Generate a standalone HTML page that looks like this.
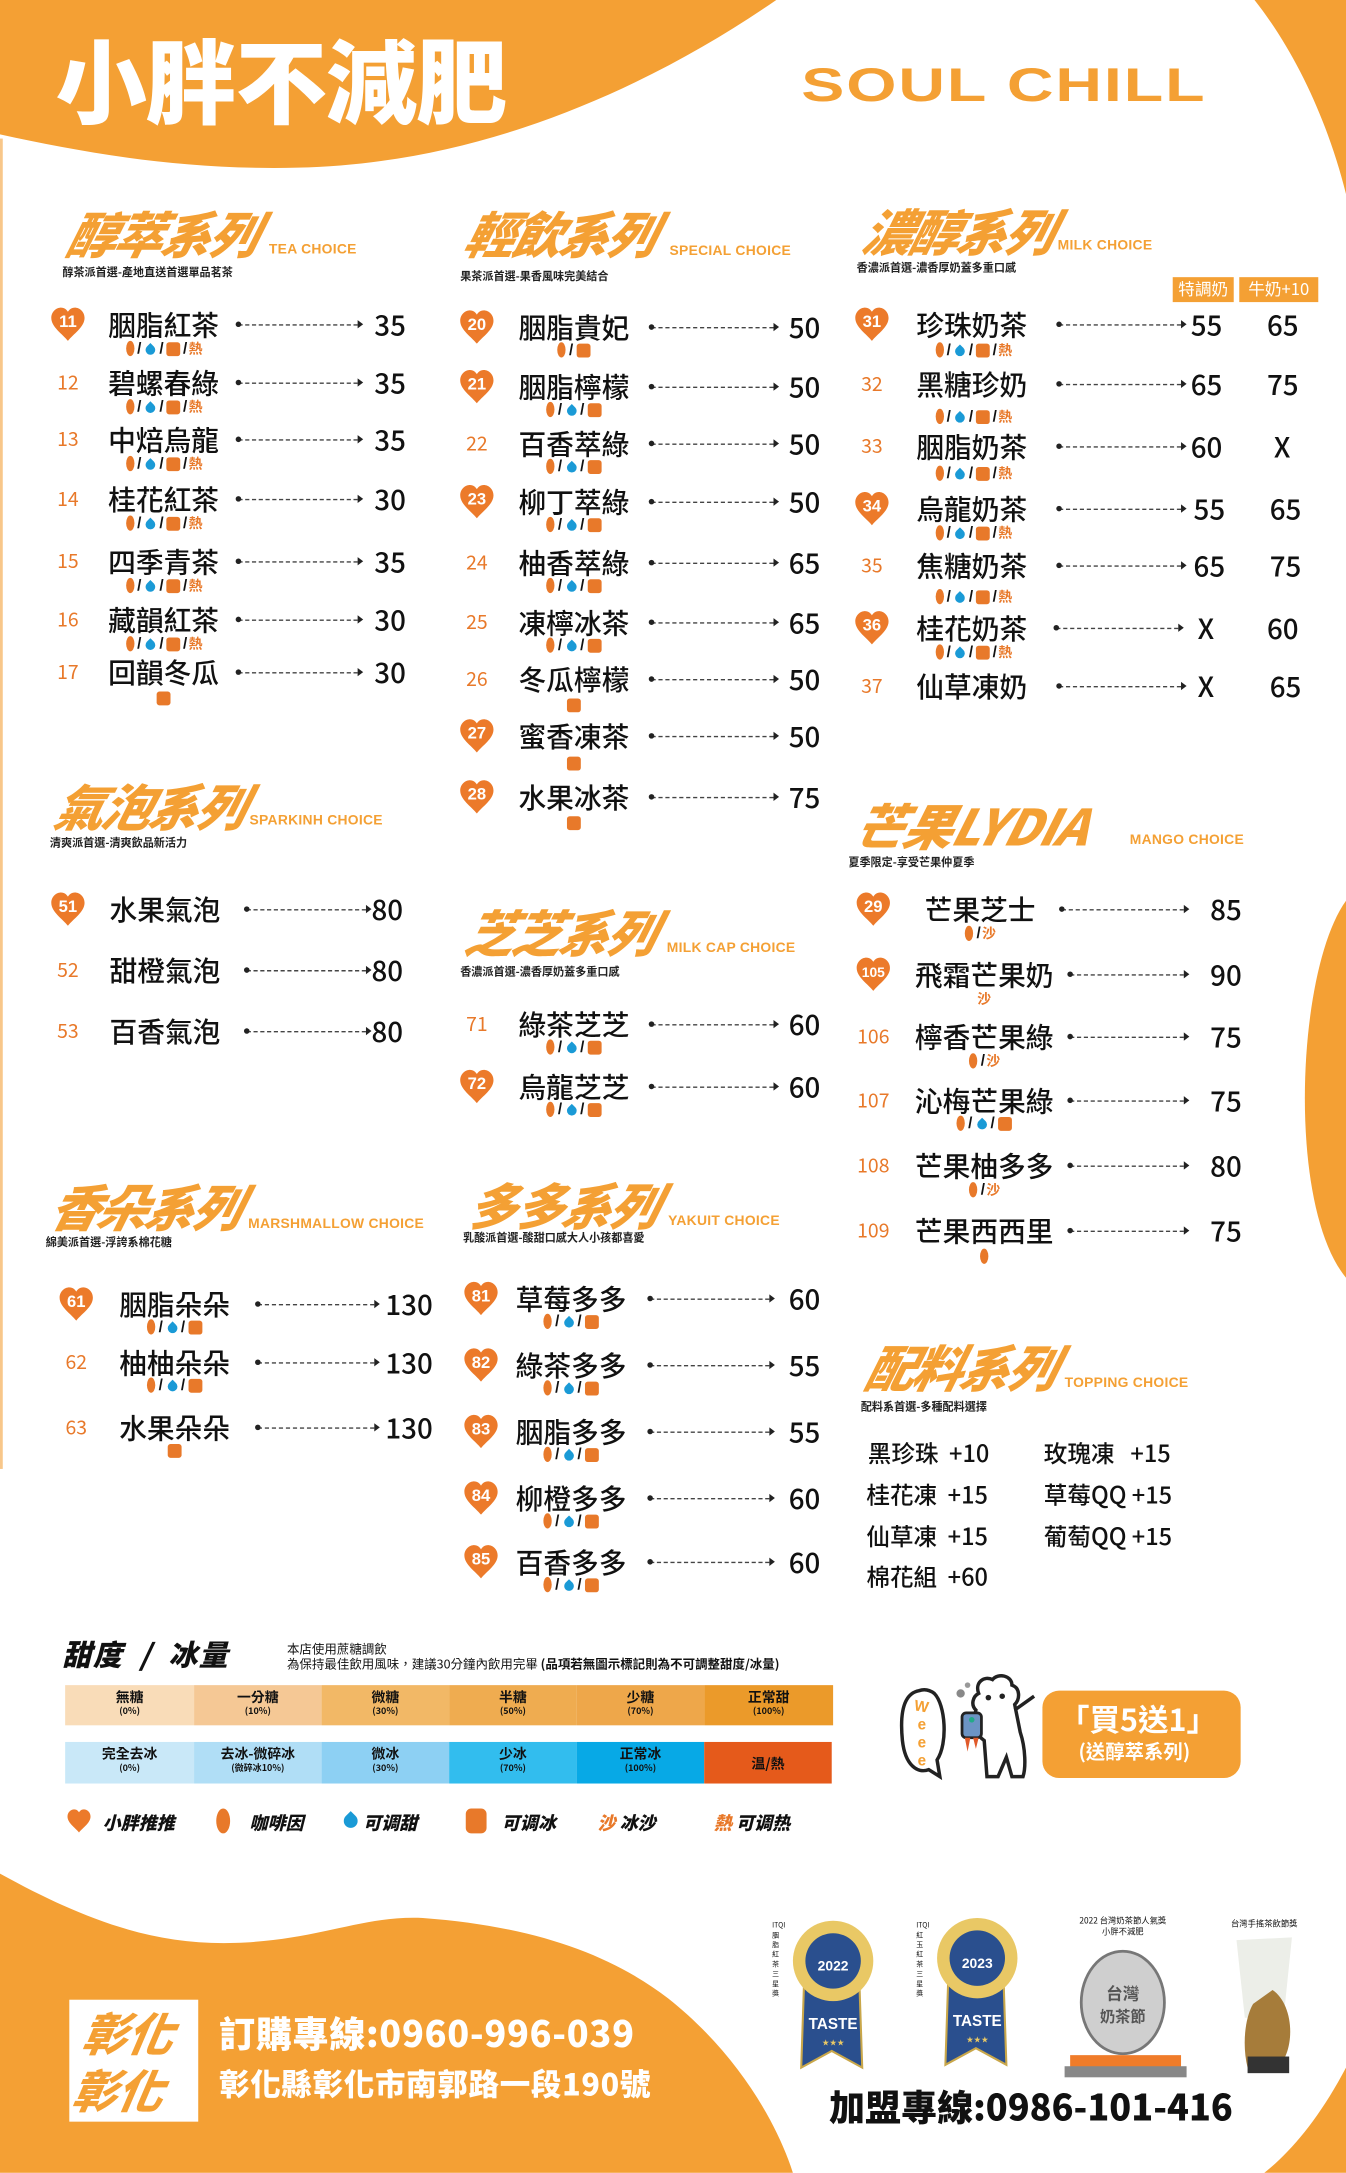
<!DOCTYPE html>
<html><head><meta charset="utf-8">
<style>
*{margin:0;padding:0;box-sizing:border-box}
html,body{width:1346px;height:2173px;overflow:hidden;background:#fff}
#w{position:absolute;left:0;top:0;width:971px;height:1568px;transform:scale(1.3862,1.3858);transform-origin:0 0;font-family:"Liberation Sans","Noto Sans CJK TC",sans-serif;color:#111}
.a{position:absolute}
.hd{position:absolute;font-family:"Noto Sans CJK TC",sans-serif;font-weight:900;font-style:italic;color:#f4a034;font-size:36px;line-height:38px;letter-spacing:-2px;transform:skewX(-14deg);white-space:nowrap}
.en{position:absolute;font-family:"Liberation Sans",sans-serif;font-weight:bold;color:#f4a034;font-size:10px;white-space:nowrap;letter-spacing:.2px}
.sub{position:absolute;font-family:"Noto Sans CJK TC",sans-serif;font-weight:700;font-size:8px;white-space:nowrap;color:#222}
.r{position:absolute;height:36px;width:340px}
.r .nm{position:absolute;top:0;font-family:"Noto Sans CJK TC",sans-serif;font-size:20px;line-height:24px;white-space:nowrap;font-weight:500}
.r .ic{position:absolute;top:23px;height:12px;font-size:11px;line-height:12px;white-space:nowrap;text-align:center}
.r .dt{position:absolute;top:12px;height:1px;border-top:1px dashed #444}
.r .dt:before{content:"";position:absolute;left:-2px;top:-3px;width:4px;height:4px;border-radius:50%;background:#222}
.r .dt:after{content:"";position:absolute;right:-4px;top:-4px;border-left:4px solid #222;border-top:3px solid transparent;border-bottom:3px solid transparent}
.r .pr{position:absolute;top:0;font-family:"Noto Sans CJK TC","Liberation Sans",sans-serif;font-size:20px;line-height:24px;font-weight:500}
.r .no{position:absolute;left:0;top:3px;width:26px;text-align:center;color:#e8792a;font-size:14px;line-height:18px;font-family:"Noto Sans CJK TC",sans-serif}
.hb{position:absolute;left:0;top:-1px;width:26px;height:26px}
.b{display:inline-block;width:6px;height:11px;border-radius:50%;background:#e8792a;vertical-align:-2px;margin:0 1px}
.d{display:inline-block;width:7px;height:7px;border-radius:0 50% 50% 50%;background:#1a9ad6;transform:rotate(45deg);vertical-align:-1px;margin:0 2px}
.i{display:inline-block;width:10px;height:10px;border-radius:2px;background:#e8792a;vertical-align:-2px;margin:0 1px}
.h,.s{color:#e8792a;font-weight:700;font-family:"Noto Sans CJK TC",sans-serif;font-size:10px}
.sl{color:#111;margin:0 1px;font-size:11px}
.tp{position:absolute;font-family:"Noto Sans CJK TC",sans-serif;font-size:17px;white-space:nowrap;font-weight:500}
.cell{position:absolute;text-align:center;font-family:"Noto Sans CJK TC",sans-serif;font-weight:700;font-size:10px;line-height:12px;padding-top:2px}
.cell small{display:block;font-size:6.5px;line-height:9px}
.lg{position:absolute;font-family:"Noto Sans CJK TC",sans-serif;font-weight:900;font-style:italic;font-size:13px;white-space:nowrap}
</style></head><body><div id="w">
<svg class="a" style="left:0;top:0" width="971" height="1568" viewBox="0 0 971 1568">
<path d="M0,0H560C470,62 350,118 215,121C130,123 60,110 0,97Z" fill="#f4a034"/>
<path d="M905,0H971V140C958,88 935,38 905,0Z" fill="#f4a034"/>
<path d="M971,650C935,700 928,870 971,922Z" fill="#f4a034"/>
<rect x="0" y="100" width="2" height="960" fill="#f8c78a"/>
<path d="M0,1352C60,1385 110,1404 170,1402C230,1400 262,1382 305,1384C385,1390 440,1410 482,1442C530,1480 560,1530 572,1568H0Z" fill="#f4a034"/>
<path d="M971,1492C952,1528 932,1552 912,1568H971Z" fill="#f4a034"/>
</svg>
<div class="a" style="left:40px;top:18px;font-family:'Noto Sans CJK TC',sans-serif;font-weight:900;font-size:66px;line-height:76px;color:#fff;letter-spacing:-1px">小胖不減肥</div>
<div class="a" style="left:578px;top:43px;font-family:'Liberation Sans',sans-serif;font-weight:bold;font-size:34px;color:#f4a034;letter-spacing:1px;transform:scaleX(1.37);transform-origin:0 0">SOUL CHILL</div>

<!-- headers -->
<div class="hd" style="left:50px;top:149px">醇萃系列</div><div class="en" style="left:194px;top:175px">TEA CHOICE</div><div class="sub" style="left:45px;top:191px">醇茶派首選-產地直送首選單品茗茶</div>
<div class="hd" style="left:337px;top:149px">輕飲系列</div><div class="en" style="left:483px;top:176px">SPECIAL CHOICE</div><div class="sub" style="left:332px;top:194px">果茶派首選-果香風味完美結合</div>
<div class="hd" style="left:624px;top:147px">濃醇系列</div><div class="en" style="left:763px;top:172px">MILK CHOICE</div><div class="sub" style="left:618px;top:188px">香濃派首選-濃香厚奶蓋多重口感</div>
<div class="a" style="left:846px;top:200px;width:44px;height:18px;background:#f4a034;color:#fff;font-size:12px;line-height:18px;text-align:center;font-family:'Noto Sans CJK TC',sans-serif">特調奶</div>
<div class="a" style="left:894px;top:200px;width:57px;height:18px;background:#f4a034;color:#fff;font-size:12px;line-height:18px;text-align:center;font-family:'Noto Sans CJK TC',sans-serif">牛奶+10</div>
<div class="hd" style="left:41px;top:562px">氣泡系列</div><div class="en" style="left:180px;top:587px">SPARKINH CHOICE</div><div class="sub" style="left:36px;top:603px">清爽派首選-清爽飲品新活力</div>
<div class="hd" style="left:337px;top:653px">芝芝系列</div><div class="en" style="left:481px;top:679px">MILK CAP CHOICE</div><div class="sub" style="left:332px;top:696px">香濃派首選-濃香厚奶蓋多重口感</div>
<div class="hd" style="left:618px;top:576px;letter-spacing:-1px">芒果LYDIA</div><div class="en" style="left:815px;top:601px">MANGO CHOICE</div><div class="sub" style="left:612px;top:617px">夏季限定-享受芒果仲夏季</div>
<div class="hd" style="left:38px;top:851px">香朵系列</div><div class="en" style="left:179px;top:878px">MARSHMALLOW CHOICE</div><div class="sub" style="left:33px;top:891px">綿美派首選-浮誇系棉花糖</div>
<div class="hd" style="left:339px;top:850px">多多系列</div><div class="en" style="left:482px;top:876px">YAKUIT CHOICE</div><div class="sub" style="left:334px;top:888px">乳酸派首選-酸甜口感大人小孩都喜愛</div>
<div class="hd" style="left:626px;top:967px">配料系列</div><div class="en" style="left:768px;top:993px">TOPPING CHOICE</div><div class="sub" style="left:621px;top:1010px">配料系首選-多種配料選擇</div>

<svg width="0" height="0" style="position:absolute"><defs><symbol id="ht" viewBox="0 0 26 26"><path d="M13,25C9,20 1,15 1,8.5C1,4 4.5,1 8,1C10.5,1 12,2.5 13,4C14,2.5 15.5,1 18,1C21.5,1 25,4 25,8.5C25,15 17,20 13,25Z" fill="#ec7a2a"/></symbol></defs></svg>

<!-- Column 1 -->
<div class="r" style="left:36px;top:222px"><svg class="hb"><use href="#ht"/><text x="13" y="15" fill="#fff" font-size="12" font-weight="bold" text-anchor="middle" font-family="Liberation Sans">11</text></svg><span class="nm" style="left:42px">胭脂紅茶</span><span class="ic" style="left:42px;width:80px"><i class="b"></i><b class="sl">/</b><i class="d"></i><b class="sl">/</b><i class="i"></i><b class="sl">/</b><span class="h">熱</span></span><span class="dt" style="left:136px;width:86px"></span><span class="pr" style="left:234px">35</span></div>
<div class="r" style="left:36px;top:264px"><span class="no">12</span><span class="nm" style="left:42px">碧螺春綠</span><span class="ic" style="left:42px;width:80px"><i class="b"></i><b class="sl">/</b><i class="d"></i><b class="sl">/</b><i class="i"></i><b class="sl">/</b><span class="h">熱</span></span><span class="dt" style="left:136px;width:86px"></span><span class="pr" style="left:234px">35</span></div>
<div class="r" style="left:36px;top:305px"><span class="no">13</span><span class="nm" style="left:42px">中焙烏龍</span><span class="ic" style="left:42px;width:80px"><i class="b"></i><b class="sl">/</b><i class="d"></i><b class="sl">/</b><i class="i"></i><b class="sl">/</b><span class="h">熱</span></span><span class="dt" style="left:136px;width:86px"></span><span class="pr" style="left:234px">35</span></div>
<div class="r" style="left:36px;top:348px"><span class="no">14</span><span class="nm" style="left:42px">桂花紅茶</span><span class="ic" style="left:42px;width:80px"><i class="b"></i><b class="sl">/</b><i class="d"></i><b class="sl">/</b><i class="i"></i><b class="sl">/</b><span class="h">熱</span></span><span class="dt" style="left:136px;width:86px"></span><span class="pr" style="left:234px">30</span></div>
<div class="r" style="left:36px;top:393px"><span class="no">15</span><span class="nm" style="left:42px">四季青茶</span><span class="ic" style="left:42px;width:80px"><i class="b"></i><b class="sl">/</b><i class="d"></i><b class="sl">/</b><i class="i"></i><b class="sl">/</b><span class="h">熱</span></span><span class="dt" style="left:136px;width:86px"></span><span class="pr" style="left:234px">35</span></div>
<div class="r" style="left:36px;top:435px"><span class="no">16</span><span class="nm" style="left:42px">藏韻紅茶</span><span class="ic" style="left:42px;width:80px"><i class="b"></i><b class="sl">/</b><i class="d"></i><b class="sl">/</b><i class="i"></i><b class="sl">/</b><span class="h">熱</span></span><span class="dt" style="left:136px;width:86px"></span><span class="pr" style="left:234px">30</span></div>
<div class="r" style="left:36px;top:473px"><span class="no">17</span><span class="nm" style="left:42px">回韻冬瓜</span><span class="ic" style="left:42px;width:80px;top:25px"><i class="i"></i></span><span class="dt" style="left:136px;width:86px"></span><span class="pr" style="left:234px">30</span></div>

<!-- Column 2 -->
<div class="r" style="left:331px;top:224px"><svg class="hb"><use href="#ht"/><text x="13" y="15" fill="#fff" font-size="12" font-weight="bold" text-anchor="middle" font-family="Liberation Sans">20</text></svg><span class="nm" style="left:43px">胭脂貴妃</span><span class="ic" style="left:43px;width:80px"><i class="b"></i><b class="sl">/</b><i class="i"></i></span><span class="dt" style="left:139px;width:88px"></span><span class="pr" style="left:238px">50</span></div>
<div class="r" style="left:331px;top:267px"><svg class="hb"><use href="#ht"/><text x="13" y="15" fill="#fff" font-size="12" font-weight="bold" text-anchor="middle" font-family="Liberation Sans">21</text></svg><span class="nm" style="left:43px">胭脂檸檬</span><span class="ic" style="left:43px;width:80px"><i class="b"></i><b class="sl">/</b><i class="d"></i><b class="sl">/</b><i class="i"></i></span><span class="dt" style="left:139px;width:88px"></span><span class="pr" style="left:238px">50</span></div>
<div class="r" style="left:331px;top:308px"><span class="no">22</span><span class="nm" style="left:43px">百香萃綠</span><span class="ic" style="left:43px;width:80px"><i class="b"></i><b class="sl">/</b><i class="d"></i><b class="sl">/</b><i class="i"></i></span><span class="dt" style="left:139px;width:88px"></span><span class="pr" style="left:238px">50</span></div>
<div class="r" style="left:331px;top:350px"><svg class="hb"><use href="#ht"/><text x="13" y="15" fill="#fff" font-size="12" font-weight="bold" text-anchor="middle" font-family="Liberation Sans">23</text></svg><span class="nm" style="left:43px">柳丁萃綠</span><span class="ic" style="left:43px;width:80px"><i class="b"></i><b class="sl">/</b><i class="d"></i><b class="sl">/</b><i class="i"></i></span><span class="dt" style="left:139px;width:88px"></span><span class="pr" style="left:238px">50</span></div>
<div class="r" style="left:331px;top:394px"><span class="no">24</span><span class="nm" style="left:43px">柚香萃綠</span><span class="ic" style="left:43px;width:80px"><i class="b"></i><b class="sl">/</b><i class="d"></i><b class="sl">/</b><i class="i"></i></span><span class="dt" style="left:139px;width:88px"></span><span class="pr" style="left:238px">65</span></div>
<div class="r" style="left:331px;top:437px"><span class="no">25</span><span class="nm" style="left:43px">凍檸冰茶</span><span class="ic" style="left:43px;width:80px"><i class="b"></i><b class="sl">/</b><i class="d"></i><b class="sl">/</b><i class="i"></i></span><span class="dt" style="left:139px;width:88px"></span><span class="pr" style="left:238px">65</span></div>
<div class="r" style="left:331px;top:478px"><span class="no">26</span><span class="nm" style="left:43px">冬瓜檸檬</span><span class="ic" style="left:43px;width:80px;top:25px"><i class="i"></i></span><span class="dt" style="left:139px;width:88px"></span><span class="pr" style="left:238px">50</span></div>
<div class="r" style="left:331px;top:519px"><svg class="hb"><use href="#ht"/><text x="13" y="15" fill="#fff" font-size="12" font-weight="bold" text-anchor="middle" font-family="Liberation Sans">27</text></svg><span class="nm" style="left:43px">蜜香凍茶</span><span class="ic" style="left:43px;width:80px;top:26px"><i class="i"></i></span><span class="dt" style="left:139px;width:88px"></span><span class="pr" style="left:238px">50</span></div>
<div class="r" style="left:331px;top:563px"><svg class="hb"><use href="#ht"/><text x="13" y="15" fill="#fff" font-size="12" font-weight="bold" text-anchor="middle" font-family="Liberation Sans">28</text></svg><span class="nm" style="left:43px">水果冰茶</span><span class="ic" style="left:43px;width:80px;top:25px"><i class="i"></i></span><span class="dt" style="left:139px;width:88px"></span><span class="pr" style="left:238px">75</span></div>

<!-- Column 3 -->
<div class="r" style="left:616px;top:222px;width:350px"><svg class="hb"><use href="#ht"/><text x="13" y="15" fill="#fff" font-size="12" font-weight="bold" text-anchor="middle" font-family="Liberation Sans">31</text></svg><span class="nm" style="left:45px">珍珠奶茶</span><span class="ic" style="left:45px;width:82px;top:24px"><i class="b"></i><b class="sl">/</b><i class="d"></i><b class="sl">/</b><i class="i"></i><b class="sl">/</b><span class="h">熱</span></span><span class="dt" style="left:148px;width:88px"></span><span class="pr" style="left:243px">55</span><span class="pr" style="left:298px">65</span></div>
<div class="r" style="left:616px;top:265px;width:350px"><span class="no">32</span><span class="nm" style="left:45px">黑糖珍奶</span><span class="ic" style="left:45px;width:82px;top:29px"><i class="b"></i><b class="sl">/</b><i class="d"></i><b class="sl">/</b><i class="i"></i><b class="sl">/</b><span class="h">熱</span></span><span class="dt" style="left:148px;width:88px"></span><span class="pr" style="left:243px">65</span><span class="pr" style="left:298px">75</span></div>
<div class="r" style="left:616px;top:310px;width:350px"><span class="no">33</span><span class="nm" style="left:45px">胭脂奶茶</span><span class="ic" style="left:45px;width:82px;top:25px"><i class="b"></i><b class="sl">/</b><i class="d"></i><b class="sl">/</b><i class="i"></i><b class="sl">/</b><span class="h">熱</span></span><span class="dt" style="left:148px;width:88px"></span><span class="pr" style="left:243px">60</span><span class="pr" style="left:303px">X</span></div>
<div class="r" style="left:616px;top:355px;width:350px"><svg class="hb"><use href="#ht"/><text x="13" y="15" fill="#fff" font-size="12" font-weight="bold" text-anchor="middle" font-family="Liberation Sans">34</text></svg><span class="nm" style="left:45px">烏龍奶茶</span><span class="ic" style="left:45px;width:82px;top:23px"><i class="b"></i><b class="sl">/</b><i class="d"></i><b class="sl">/</b><i class="i"></i><b class="sl">/</b><span class="h">熱</span></span><span class="dt" style="left:148px;width:88px"></span><span class="pr" style="left:245px">55</span><span class="pr" style="left:300px">65</span></div>
<div class="r" style="left:616px;top:396px;width:350px"><span class="no">35</span><span class="nm" style="left:45px">焦糖奶茶</span><span class="ic" style="left:45px;width:82px;top:28px"><i class="b"></i><b class="sl">/</b><i class="d"></i><b class="sl">/</b><i class="i"></i><b class="sl">/</b><span class="h">熱</span></span><span class="dt" style="left:148px;width:88px"></span><span class="pr" style="left:245px">65</span><span class="pr" style="left:300px">75</span></div>
<div class="r" style="left:616px;top:441px;width:350px"><svg class="hb"><use href="#ht"/><text x="13" y="15" fill="#fff" font-size="12" font-weight="bold" text-anchor="middle" font-family="Liberation Sans">36</text></svg><span class="nm" style="left:45px">桂花奶茶</span><span class="ic" style="left:45px;width:82px;top:23px"><i class="b"></i><b class="sl">/</b><i class="d"></i><b class="sl">/</b><i class="i"></i><b class="sl">/</b><span class="h">熱</span></span><span class="dt" style="left:146px;width:88px"></span><span class="pr" style="left:248px">X</span><span class="pr" style="left:298px">60</span></div>
<div class="r" style="left:616px;top:483px;width:350px"><span class="no">37</span><span class="nm" style="left:45px">仙草凍奶</span><span class="dt" style="left:148px;width:88px"></span><span class="pr" style="left:248px">X</span><span class="pr" style="left:300px">65</span></div>

<!-- Sparkling -->
<div class="r" style="left:36px;top:644px"><svg class="hb"><use href="#ht"/><text x="13" y="15" fill="#fff" font-size="12" font-weight="bold" text-anchor="middle" font-family="Liberation Sans">51</text></svg><span class="nm" style="left:43px">水果氣泡</span><span class="dt" style="left:142px;width:86px"></span><span class="pr" style="left:232px">80</span></div>
<div class="r" style="left:36px;top:688px"><span class="no">52</span><span class="nm" style="left:43px">甜橙氣泡</span><span class="dt" style="left:142px;width:86px"></span><span class="pr" style="left:232px">80</span></div>
<div class="r" style="left:36px;top:732px"><span class="no">53</span><span class="nm" style="left:43px">百香氣泡</span><span class="dt" style="left:142px;width:86px"></span><span class="pr" style="left:232px">80</span></div>

<!-- 芝芝 -->
<div class="r" style="left:331px;top:727px"><span class="no">71</span><span class="nm" style="left:43px">綠茶芝芝</span><span class="ic" style="left:43px;width:80px"><i class="b"></i><b class="sl">/</b><i class="d"></i><b class="sl">/</b><i class="i"></i></span><span class="dt" style="left:139px;width:88px"></span><span class="pr" style="left:238px">60</span></div>
<div class="r" style="left:331px;top:772px"><svg class="hb"><use href="#ht"/><text x="13" y="15" fill="#fff" font-size="12" font-weight="bold" text-anchor="middle" font-family="Liberation Sans">72</text></svg><span class="nm" style="left:43px">烏龍芝芝</span><span class="ic" style="left:43px;width:80px"><i class="b"></i><b class="sl">/</b><i class="d"></i><b class="sl">/</b><i class="i"></i></span><span class="dt" style="left:139px;width:88px"></span><span class="pr" style="left:238px">60</span></div>

<!-- Mango -->
<div class="r" style="left:617px;top:644px"><svg class="hb"><use href="#ht"/><text x="13" y="15" fill="#fff" font-size="12" font-weight="bold" text-anchor="middle" font-family="Liberation Sans">29</text></svg><span class="nm" style="left:50px">芒果芝士</span><span class="ic" style="left:50px;width:80px"><i class="b"></i><b class="sl">/</b><span class="s">沙</span></span><span class="dt" style="left:149px;width:88px"></span><span class="pr" style="left:256px">85</span></div>
<div class="r" style="left:617px;top:691px"><svg class="hb"><use href="#ht"/><text x="13" y="15" fill="#fff" font-size="10" font-weight="bold" text-anchor="middle" font-family="Liberation Sans">105</text></svg><span class="nm" style="left:43px">飛霜芒果奶</span><span class="ic" style="left:43px;width:100px"><span class="s">沙</span></span><span class="dt" style="left:155px;width:82px"></span><span class="pr" style="left:256px">90</span></div>
<div class="r" style="left:617px;top:736px"><span class="no">106</span><span class="nm" style="left:43px">檸香芒果綠</span><span class="ic" style="left:43px;width:100px"><i class="b"></i><b class="sl">/</b><span class="s">沙</span></span><span class="dt" style="left:155px;width:82px"></span><span class="pr" style="left:256px">75</span></div>
<div class="r" style="left:617px;top:782px"><span class="no">107</span><span class="nm" style="left:43px">沁梅芒果綠</span><span class="ic" style="left:43px;width:100px"><i class="b"></i><b class="sl">/</b><i class="d"></i><b class="sl">/</b><i class="i"></i></span><span class="dt" style="left:155px;width:82px"></span><span class="pr" style="left:256px">75</span></div>
<div class="r" style="left:617px;top:829px"><span class="no">108</span><span class="nm" style="left:43px">芒果柚多多</span><span class="ic" style="left:43px;width:100px"><i class="b"></i><b class="sl">/</b><span class="s">沙</span></span><span class="dt" style="left:155px;width:82px"></span><span class="pr" style="left:256px">80</span></div>
<div class="r" style="left:617px;top:876px"><span class="no">109</span><span class="nm" style="left:43px">芒果西西里</span><span class="ic" style="left:43px;width:100px;top:25px"><i class="b"></i></span><span class="dt" style="left:155px;width:82px"></span><span class="pr" style="left:256px">75</span></div>

<!-- Marshmallow -->
<div class="r" style="left:42px;top:929px"><svg class="hb"><use href="#ht"/><text x="13" y="15" fill="#fff" font-size="12" font-weight="bold" text-anchor="middle" font-family="Liberation Sans">61</text></svg><span class="nm" style="left:44px">胭脂朵朵</span><span class="ic" style="left:44px;width:80px"><i class="b"></i><b class="sl">/</b><i class="d"></i><b class="sl">/</b><i class="i"></i></span><span class="dt" style="left:144px;width:84px"></span><span class="pr" style="left:236px">130</span></div>
<div class="r" style="left:42px;top:971px"><span class="no">62</span><span class="nm" style="left:44px">柚柚朵朵</span><span class="ic" style="left:44px;width:80px"><i class="b"></i><b class="sl">/</b><i class="d"></i><b class="sl">/</b><i class="i"></i></span><span class="dt" style="left:144px;width:84px"></span><span class="pr" style="left:236px">130</span></div>
<div class="r" style="left:42px;top:1018px"><span class="no">63</span><span class="nm" style="left:44px">水果朵朵</span><span class="ic" style="left:44px;width:80px"><i class="i"></i></span><span class="dt" style="left:144px;width:84px"></span><span class="pr" style="left:236px">130</span></div>

<!-- 多多 -->
<div class="r" style="left:334px;top:925px"><svg class="hb"><use href="#ht"/><text x="13" y="15" fill="#fff" font-size="12" font-weight="bold" text-anchor="middle" font-family="Liberation Sans">81</text></svg><span class="nm" style="left:38px">草莓多多</span><span class="ic" style="left:38px;width:80px"><i class="b"></i><b class="sl">/</b><i class="d"></i><b class="sl">/</b><i class="i"></i></span><span class="dt" style="left:135px;width:86px"></span><span class="pr" style="left:235px">60</span></div>
<div class="r" style="left:334px;top:973px"><svg class="hb"><use href="#ht"/><text x="13" y="15" fill="#fff" font-size="12" font-weight="bold" text-anchor="middle" font-family="Liberation Sans">82</text></svg><span class="nm" style="left:38px">綠茶多多</span><span class="ic" style="left:38px;width:80px"><i class="b"></i><b class="sl">/</b><i class="d"></i><b class="sl">/</b><i class="i"></i></span><span class="dt" style="left:135px;width:86px"></span><span class="pr" style="left:235px">55</span></div>
<div class="r" style="left:334px;top:1021px"><svg class="hb"><use href="#ht"/><text x="13" y="15" fill="#fff" font-size="12" font-weight="bold" text-anchor="middle" font-family="Liberation Sans">83</text></svg><span class="nm" style="left:38px">胭脂多多</span><span class="ic" style="left:38px;width:80px"><i class="b"></i><b class="sl">/</b><i class="d"></i><b class="sl">/</b><i class="i"></i></span><span class="dt" style="left:135px;width:86px"></span><span class="pr" style="left:235px">55</span></div>
<div class="r" style="left:334px;top:1069px"><svg class="hb"><use href="#ht"/><text x="13" y="15" fill="#fff" font-size="12" font-weight="bold" text-anchor="middle" font-family="Liberation Sans">84</text></svg><span class="nm" style="left:38px">柳橙多多</span><span class="ic" style="left:38px;width:80px"><i class="b"></i><b class="sl">/</b><i class="d"></i><b class="sl">/</b><i class="i"></i></span><span class="dt" style="left:135px;width:86px"></span><span class="pr" style="left:235px">60</span></div>
<div class="r" style="left:334px;top:1115px"><svg class="hb"><use href="#ht"/><text x="13" y="15" fill="#fff" font-size="12" font-weight="bold" text-anchor="middle" font-family="Liberation Sans">85</text></svg><span class="nm" style="left:38px">百香多多</span><span class="ic" style="left:38px;width:80px"><i class="b"></i><b class="sl">/</b><i class="d"></i><b class="sl">/</b><i class="i"></i></span><span class="dt" style="left:135px;width:86px"></span><span class="pr" style="left:235px">60</span></div>

<!-- Toppings -->
<div class="tp" style="left:626px;top:1035px">黑珍珠 &nbsp;+10</div><div class="tp" style="left:753px;top:1035px">玫瑰凍 &nbsp;&nbsp;+15</div>
<div class="tp" style="left:625px;top:1065px">桂花凍 &nbsp;+15</div><div class="tp" style="left:753px;top:1065px">草莓QQ +15</div>
<div class="tp" style="left:625px;top:1095px">仙草凍 &nbsp;+15</div><div class="tp" style="left:753px;top:1095px">葡萄QQ +15</div>
<div class="tp" style="left:625px;top:1124px">棉花組 &nbsp;+60</div>

<!-- Sweetness / ice -->
<div class="a" style="left:45px;top:1180px;font-family:'Noto Sans CJK TC',sans-serif;font-weight:900;font-style:italic;font-size:21px;line-height:28px;letter-spacing:1px">甜度 &nbsp;/ &nbsp;冰量</div>
<div class="a" style="left:207px;top:1184px;font-family:'Noto Sans CJK TC',sans-serif;font-size:9px;line-height:11px;white-space:nowrap">本店使用蔗糖調飲<br>為保持最佳飲用風味，建議30分鐘內飲用完畢 <b>(品項若無圖示標記則為不可調整甜度/冰量)</b></div>
<div class="cell" style="left:47px;top:1216px;width:93px;height:29px;background:#f9dcb8">無糖<small>(0%)</small></div>
<div class="cell" style="left:140px;top:1216px;width:92px;height:29px;background:#f5c895">一分糖<small>(10%)</small></div>
<div class="cell" style="left:232px;top:1216px;width:92px;height:29px;background:#f2b866">微糖<small>(30%)</small></div>
<div class="cell" style="left:324px;top:1216px;width:92px;height:29px;background:#efac50">半糖<small>(50%)</small></div>
<div class="cell" style="left:416px;top:1216px;width:92px;height:29px;background:#eea74a">少糖<small>(70%)</small></div>
<div class="cell" style="left:508px;top:1216px;width:93px;height:29px;background:#eb9a2a">正常甜<small>(100%)</small></div>
<div class="cell" style="left:47px;top:1257px;width:93px;height:30px;background:#c9e8f8">完全去冰<small>(0%)</small></div>
<div class="cell" style="left:140px;top:1257px;width:92px;height:30px;background:#b0def6">去冰-微碎冰<small>(微碎冰10%)</small></div>
<div class="cell" style="left:232px;top:1257px;width:92px;height:30px;background:#8dd0f3">微冰<small>(30%)</small></div>
<div class="cell" style="left:324px;top:1257px;width:92px;height:30px;background:#32bdee">少冰<small>(70%)</small></div>
<div class="cell" style="left:416px;top:1257px;width:92px;height:30px;background:#07a9e6">正常冰<small>(100%)</small></div>
<div class="cell" style="left:508px;top:1257px;width:92px;height:30px;background:#e55a1b;line-height:26px">温/熱</div>

<!-- legend -->
<svg class="a" style="left:48px;top:1305px" width="18" height="18"><use href="#ht"/></svg>
<div class="lg" style="left:74px;top:1305px">小胖推推</div>
<i class="a" style="left:156px;top:1305px;width:10px;height:18px;border-radius:50%;background:#e8792a"></i>
<div class="lg" style="left:180px;top:1305px">咖啡因</div>
<i class="a" style="left:248px;top:1309px;width:10px;height:10px;border-radius:0 50% 50% 50%;background:#1a9ad6;transform:rotate(45deg)"></i>
<div class="lg" style="left:262px;top:1305px">可调甜</div>
<i class="a" style="left:336px;top:1305px;width:15px;height:18px;border-radius:4px;background:#e8792a"></i>
<div class="lg" style="left:362px;top:1305px">可调冰</div>
<div class="lg" style="left:431px;top:1305px"><span style="color:#e8792a">沙</span> 冰沙</div>
<div class="lg" style="left:515px;top:1305px"><span style="color:#e8792a">熱</span> 可调热</div>

<!-- promo -->
<div class="a" style="left:752px;top:1220px;width:143px;height:63px;background:#f4a034;border-radius:12px"></div>
<div class="a" style="left:764px;top:1226px;color:#fff;font-family:'Noto Sans CJK TC',sans-serif;font-weight:700;font-size:22px;line-height:28px;white-space:nowrap">「買5送1」</div>
<div class="a" style="left:778px;top:1254px;color:#fff;font-family:'Noto Sans CJK TC',sans-serif;font-weight:700;font-size:14px;line-height:20px;white-space:nowrap">(送醇萃系列)</div>
<svg class="a" style="left:648px;top:1206px" width="115" height="80" viewBox="0 0 115 80">
<path d="M15,14C4,16 1,30 3,50C5,68 14,74 22,71L30,76L28,64C36,52 34,24 26,16C22,13 18,13 15,14Z" fill="#fff" stroke="#222" stroke-width="2.5"/>
<text x="11" y="28" fill="#f4a034" font-size="11" font-weight="bold" font-family="Liberation Sans" transform="rotate(10 11 28)">W</text>
<text x="14" y="42" fill="#f4a034" font-size="11" font-weight="bold" font-family="Liberation Sans">e</text>
<text x="14" y="55" fill="#f4a034" font-size="11" font-weight="bold" font-family="Liberation Sans">e</text>
<text x="14" y="68" fill="#f4a034" font-size="11" font-weight="bold" font-family="Liberation Sans">e</text>
<path d="M58,16C55,8 62,3 68,6C72,1 82,3 82,10C88,12 88,20 84,24L88,44C92,56 92,70 90,76L82,76L78,62L72,76L64,76L62,50C56,46 54,36 56,28C52,24 54,18 58,16Z" fill="#fff" stroke="#222" stroke-width="2.5"/>
<path d="M84,28L98,18" stroke="#222" stroke-width="2.5"/>
<rect x="46" y="30" width="14" height="18" rx="3" fill="#6c94c4" stroke="#222" stroke-width="2"/>
<circle cx="53" cy="35" r="2" fill="#2a8"/>
<path d="M48,48L50,58L52,48M54,48L56,56L58,48" fill="#e05a2a"/>
<circle cx="65" cy="19" r="2" fill="#222"/><circle cx="75" cy="18" r="2" fill="#222"/>
<circle cx="45" cy="16" r="3" fill="#888"/><circle cx="50" cy="10" r="2" fill="#999"/>
</svg>

<!-- bottom -->
<div class="a" style="left:50px;top:1443px;width:93px;height:88px;background:#fff"></div>
<div class="a" style="left:56px;top:1446px;font-family:'Noto Sans CJK TC',sans-serif;font-weight:900;font-style:italic;font-size:33px;line-height:41px;color:#f4a034;transform:skewX(-10deg)">彰化<br>彰化</div>
<div class="a" style="left:158px;top:1449px;color:#fff;font-family:'Noto Sans CJK TC',sans-serif;font-weight:900;font-size:26px;line-height:36px;white-space:nowrap;letter-spacing:.5px">訂購專線:0960-996-039</div>
<div class="a" style="left:158px;top:1486px;color:#fff;font-family:'Noto Sans CJK TC',sans-serif;font-weight:900;font-size:22px;line-height:34px;white-space:nowrap;letter-spacing:.5px">彰化縣彰化市南郭路一段190號</div>
<div class="a" style="left:598px;top:1502px;color:#111;font-family:'Noto Sans CJK TC',sans-serif;font-weight:900;font-size:26px;line-height:36px;white-space:nowrap">加盟專線:0986-101-416</div>

<!-- awards -->
<div class="a" style="left:557px;top:1386px;font-size:5px;width:8px;line-height:7px;font-family:'Noto Sans CJK TC',sans-serif">ITQI 胭脂紅茶三星獎</div>
<div class="a" style="left:661px;top:1386px;font-size:5px;width:8px;line-height:7px;font-family:'Noto Sans CJK TC',sans-serif">ITQI 紅玉紅茶三星獎</div>
<svg class="a" style="left:570px;top:1382px" width="70" height="118" viewBox="0 0 70 118">
<path d="M10,50L8,110L30,98L52,110L50,50Z" fill="#2a4f8e" stroke="#c9a74a" stroke-width="1.5"/>
<circle cx="31" cy="33" r="29" fill="#e9c865"/><circle cx="31" cy="33" r="20" fill="#2a4f8e"/>
<text x="31" y="40" fill="#fff" font-size="10" text-anchor="middle" font-family="Liberation Sans" font-weight="bold">2022</text>
<text x="31" y="82" fill="#fff" font-size="11" text-anchor="middle" font-family="Liberation Sans" font-weight="bold">TASTE</text>
<text x="31" y="94" fill="#e9c865" font-size="6" text-anchor="middle" font-family="Liberation Sans">★★★</text></svg>
<svg class="a" style="left:674px;top:1380px" width="70" height="118" viewBox="0 0 70 118">
<path d="M10,50L8,110L30,98L52,110L50,50Z" fill="#2a4f8e" stroke="#c9a74a" stroke-width="1.5"/>
<circle cx="31" cy="33" r="29" fill="#e9c865"/><circle cx="31" cy="33" r="20" fill="#2a4f8e"/>
<text x="31" y="40" fill="#fff" font-size="10" text-anchor="middle" font-family="Liberation Sans" font-weight="bold">2023</text>
<text x="31" y="82" fill="#fff" font-size="11" text-anchor="middle" font-family="Liberation Sans" font-weight="bold">TASTE</text>
<text x="31" y="94" fill="#e9c865" font-size="6" text-anchor="middle" font-family="Liberation Sans">★★★</text></svg>
<div class="a" style="left:770px;top:1382px;font-size:6px;line-height:8px;text-align:center;width:80px;font-family:'Noto Sans CJK TC',sans-serif">2022 台灣奶茶節人氣獎<br>小胖不減肥</div>
<svg class="a" style="left:762px;top:1405px" width="100" height="96" viewBox="0 0 100 96">
<ellipse cx="48" cy="40" rx="30" ry="37" fill="#cfcfcf" stroke="#777" stroke-width="2"/>
<text x="48" y="38" fill="#555" font-size="12" text-anchor="middle" font-family="Noto Sans CJK TC" font-weight="bold">台灣</text>
<text x="48" y="54" fill="#555" font-size="11" text-anchor="middle" font-family="Noto Sans CJK TC" font-weight="bold">奶茶節</text>
<rect x="10" y="78" width="80" height="10" fill="#f07c2a"/><rect x="6" y="86" width="88" height="8" fill="#888"/></svg>
<div class="a" style="left:888px;top:1384px;font-size:6px;line-height:8px;font-family:'Noto Sans CJK TC',sans-serif;white-space:nowrap">台灣手搖茶飲節獎</div>
<svg class="a" style="left:888px;top:1396px" width="52" height="102" viewBox="0 0 52 102">
<path d="M4,4L44,2L38,60L10,60Z" fill="#eceee8"/><path d="M30,40C42,48 46,70 40,86L36,96L12,96C8,80 10,60 16,50Z" fill="#a67c3a"/><rect x="12" y="88" width="30" height="12" fill="#333"/></svg>
</div></body></html>
